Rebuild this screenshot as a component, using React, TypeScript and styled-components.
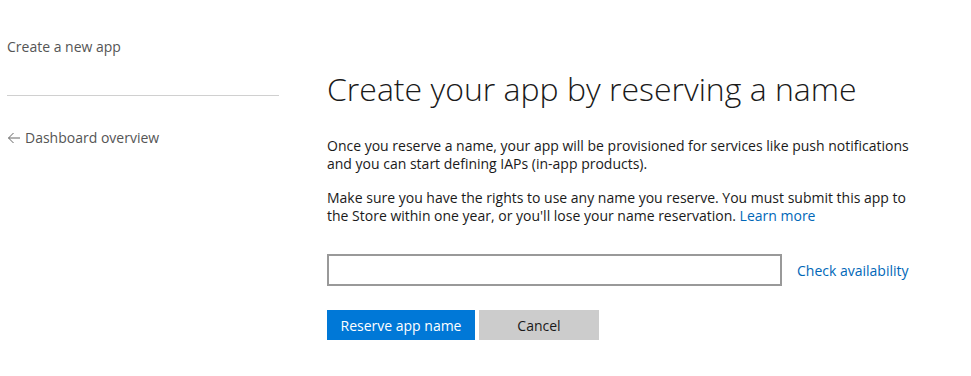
import styled, { createGlobalStyle } from "styled-components";

const GlobalStyle = createGlobalStyle`
  html, body {
    margin: 0;
    background: #ffffff;
    font-family: "Open Sans", "Segoe UI", sans-serif;
  }
`;

const Page = styled.div`
  display: flex;
  width: 971px;
  height: 376px;
  overflow: hidden;
`;

const Sidebar = styled.nav`
  width: 272px;
  margin-left: 7px;
  padding-top: 37px;
  display: flex;
  flex-direction: column;
`;

const SideTitle = styled.div`
  font-size: 14px;
  color: #555;
  line-height: 20px;
`;

const Divider = styled.hr`
  border: none;
  border-top: 1px solid #d0d0d0;
  margin: 38px 0 0;
`;

const BackLink = styled.a`
  margin-top: 32px;
  display: flex;
  align-items: center;
  gap: 4px;
  font-size: 14px;
  line-height: 20px;
  color: #555;
  text-decoration: none;
`;

const Main = styled.main`
  margin-left: 48px;
  padding-top: 67px;
  width: 600px;
  font-size: 14px;
`;

const Heading = styled.h1`
  margin: 0;
  font-size: 32px;
  font-weight: 300;
  line-height: 44px;
  color: #1a1a1a;
  white-space: nowrap;
`;

const Paragraph = styled.p`
  margin: 0 0 16px;
  font-size: 14px;
  line-height: 18px;
  color: #1a1a1a;
  white-space: nowrap;

  &:first-of-type {
    margin-top: 26px;
  }
`;

const Link = styled.a`
  color: #0067b8;
  font-size: 14px;
  text-decoration: none;
  white-space: nowrap;
`;

const NameRow = styled.div`
  display: flex;
  align-items: center;
  gap: 15px;
  margin-top: 29px;
`;

const NameInput = styled.input`
  box-sizing: border-box;
  flex-shrink: 0;
  width: 455px;
  height: 32px;
  border: 2px solid #999;
  padding: 0 8px;
  font: inherit;
  outline: none;
`;

const Actions = styled.div`
  display: flex;
  gap: 4px;
  margin-top: 24px;
`;

const Button = styled.button<{ $primary?: boolean }>`
  height: 30px;
  width: ${(p) => (p.$primary ? "148px" : "120px")};
  border: none;
  font-family: inherit;
  font-size: 14px;
  color: ${(p) => (p.$primary ? "#fff" : "#1a1a1a")};
  background: ${(p) => (p.$primary ? "#0078d7" : "#cccccc")};
  cursor: pointer;
`;

export default function App() {
  return (
    <>
      <GlobalStyle />
      <Page>
        <Sidebar>
          <SideTitle>Create a new app</SideTitle>
          <Divider />
          <BackLink href="#">
            <svg width="14" height="12" viewBox="0 0 14 12" fill="none">
              <path d="M13 6H1.5M6.5 1L1.5 6l5 5" stroke="#666" strokeWidth="1" />
            </svg>
            Dashboard overview
          </BackLink>
        </Sidebar>
        <Main>
          <Heading>Create your app by reserving a name</Heading>
          <Paragraph>
            Once you reserve a name, your app will be provisioned for services like push notifications
            <br />
            and you can start defining IAPs (in-app products).
          </Paragraph>
          <Paragraph>
            Make sure you have the rights to use any name you reserve. You must submit this app to
            <br />
            the Store within one year, or you'll lose your name reservation. <Link href="#">Learn more</Link>
          </Paragraph>
          <NameRow>
            <NameInput type="text" />
            <Link href="#">Check availability</Link>
          </NameRow>
          <Actions>
            <Button $primary>Reserve app name</Button>
            <Button>Cancel</Button>
          </Actions>
        </Main>
      </Page>
    </>
  );
}
